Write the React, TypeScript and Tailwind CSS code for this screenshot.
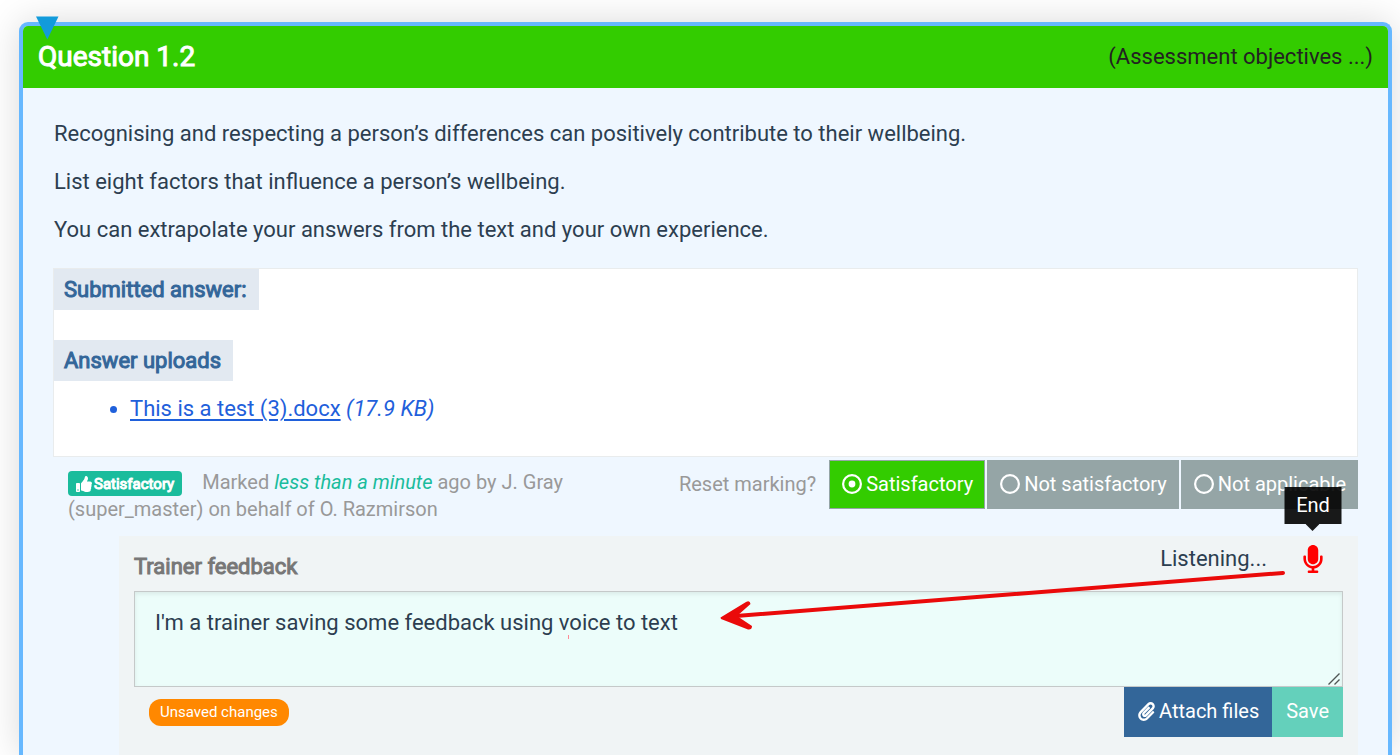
import { useState } from "react";
import type { ReactNode } from "react";
import { FaMicrophone, FaPaperclip, FaThumbsUp } from "react-icons/fa";

const fakeBold = "font-normal [-webkit-text-stroke:1px_currentColor]";

function RadioMark({ checked }: { checked: boolean }) {
  return (
    <svg viewBox="0 0 20 20" className="size-5 shrink-0" fill="none" aria-hidden="true">
      <circle cx="10" cy="10" r="8.9" stroke="currentColor" strokeWidth="2.2" />
      {checked && <circle cx="10" cy="10" r="3.4" fill="currentColor" />}
    </svg>
  );
}

type Mark = "satisfactory" | "not-satisfactory" | "not-applicable";

const marks: { id: Mark; label: string }[] = [
  { id: "satisfactory", label: "Satisfactory" },
  { id: "not-satisfactory", label: "Not satisfactory" },
  { id: "not-applicable", label: "Not applicable" },
];

function MarkOption({
  id,
  label,
  checked,
  onSelect,
}: {
  id: Mark;
  label: string;
  checked: boolean;
  onSelect: (id: Mark) => void;
}) {
  return (
    <label
      htmlFor={id}
      className={`relative flex h-[49px] cursor-pointer items-center gap-1 border border-[#95a5a6] pr-[11px] pb-[2px] pl-3 text-white ${
        checked ? "bg-[#33cc00]" : "bg-[#95a5a6]"
      }`}
    >
      <input
        id={id}
        type="radio"
        name="mark"
        className="sr-only"
        checked={checked}
        onChange={() => onSelect(id)}
      />
      <RadioMark checked={checked} />
      <span>{label}</span>
    </label>
  );
}

function Tag({ children }: { children: ReactNode }) {
  return (
    <h3 className={`flex h-[41px] w-fit items-center bg-[#e2e9f1] pr-3 pl-[10px] text-[22px] text-[#336699] ${fakeBold}`}>
      {children}
    </h3>
  );
}

export default function App() {
  const [mark, setMark] = useState<Mark>("satisfactory");
  const [feedback, setFeedback] = useState("I'm a trainer saving some feedback using voice to text");

  return (
    <div className="flex min-h-screen flex-col overflow-hidden bg-white pt-[22px] pr-[8px] pl-[19px] font-[Roboto,sans-serif] text-[#2c3e50]">
      <section className="relative flex flex-1 flex-col rounded-t-[9px] border-4 border-b-0 border-[#66b8ff] bg-[#eff7ff] shadow-[0_0_36px_rgba(0,0,0,0.15)]">
        <svg viewBox="0 0 24 24" className="absolute -top-[10px] left-[12px] size-6" aria-hidden="true">
          <path d="M1 0.5H23.5L12.3 23.5Z" fill="#129bdb" />
        </svg>
        <header className="flex h-[62px] items-center justify-between rounded-t-[5px] bg-[#33cc00] px-[15px]">
          <h2 className={`text-[28px] text-white ${fakeBold}`}>Question 1.2</h2>
          <button type="button" className="cursor-pointer pb-[2px] text-[22px] text-[#222222]">
            (Assessment objectives ...)
          </button>
        </header>

        <div className="flex flex-1 flex-col px-[30px] pt-[30px]">
          <div className="flex flex-col gap-4 pl-px text-[22px] leading-8">
            <p>Recognising and respecting a person’s differences can positively contribute to their wellbeing.</p>
            <p>List eight factors that influence a person’s wellbeing.</p>
            <p>You can extrapolate your answers from the text and your own experience.</p>
          </div>

          <div className="mt-[22px] border border-[#e9eced] bg-white pb-[31px]">
            <Tag>Submitted answer:</Tag>
            <div className="h-[30px]" />
            <Tag>Answer uploads</Tag>
            <ul className="mt-3 list-disc pl-[76px] text-[22px] leading-8 text-[#1f60db]">
              <li>
                <a href="#file" className="underline decoration-2 underline-offset-[3px]">
                  This is a test (3).docx
                </a>{" "}
                <em>(17.9 KB)</em>
              </li>
            </ul>
          </div>

          <div className="mt-[3px] flex items-start justify-between text-[20px]">
            <p className="w-[530px] pt-[9px] pl-[15px] leading-[27px] text-[#999999]">
              <span className={`mr-5 inline-flex h-[25px] items-center gap-[2px] rounded-[4px] bg-[#1abc9c] px-2 align-middle text-[15px] leading-5 text-white ${fakeBold}`}>
                <FaThumbsUp className="size-4" aria-hidden="true" />
                Satisfactory
              </span>
              Marked <em className="text-[#1abc9c]">less than a minute</em> ago by J. Gray (super_master) on behalf of O.
              Razmirson
            </p>
            <div className="flex items-center">
              <button type="button" className="mr-[13px] cursor-pointer pb-[2px] text-[#999999]">
                Reset marking?
              </button>
              <div role="radiogroup" aria-label="Marking" className="flex gap-[2px]">
                {marks.map((m) => (
                  <MarkOption key={m.id} id={m.id} label={m.label} checked={mark === m.id} onSelect={setMark} />
                ))}
              </div>
            </div>
          </div>

          <div className="relative mt-[13px] ml-[66px] flex-1 bg-[#f0f4f5] px-[15px] pt-2">
            <div className="flex h-[47px] justify-between">
              <label htmlFor="feedback" className={`pt-[7px] text-[22px] leading-8 text-[#777777] ${fakeBold}`}>
                Trainer feedback
              </label>
              <div className="flex items-start gap-[36px] pt-px pr-[20px]">
                <span className="text-[22px] leading-7">Listening...</span>
                <div className="relative">
                  <button type="button" aria-label="End" className="block cursor-pointer text-[#ff0000]">
                    <FaMicrophone className="h-[28px] w-[20px]" />
                  </button>
                  <div
                    role="tooltip"
                    className="absolute bottom-[49px] left-1/2 flex h-[37px] w-[57px] -translate-x-1/2 items-center justify-center bg-black/90 pb-[2px] text-[20px] text-white"
                  >
                    End
                    <svg viewBox="0 0 14 7" className="absolute top-full left-[21px] h-[7px] w-[14px]" aria-hidden="true">
                      <path d="M0 0H14L7 7Z" fill="#000000" fillOpacity="0.9" />
                    </svg>
                  </div>
                </div>
              </div>
            </div>
            <div className="relative">
              <textarea
                id="feedback"
                value={feedback}
                onChange={(e) => setFeedback(e.target.value)}
                spellCheck={false}
                className="block h-24 w-full resize-none border border-[#c5c9c9] bg-[#ecfdfa] px-5 py-[15px] text-[22px] leading-8 shadow-[inset_0_2px_4px_rgba(0,0,0,0.08)] outline-none"
              />
              <svg
                viewBox="0 0 12 12"
                className="pointer-events-none absolute right-[3px] bottom-[2px] size-3"
                fill="none"
                stroke="#4f5655"
                strokeWidth="1.4"
                aria-hidden="true"
              >
                <path d="M0.500 11.500L11.500 0.500M6.500 11.500L11.500 6.500" />
              </svg>
            </div>
            <div className="flex items-start justify-between text-[20px] text-white">
              <span className="mt-3 ml-[15px] flex h-[27px] items-center rounded-[12px] bg-[#ff8800] px-[11px] text-[15px]">
                Unsaved changes
              </span>
              <div className="flex">
                <button type="button" className="flex h-[50px] cursor-pointer items-center gap-[3px] bg-[#336699] px-[13px] pb-[2px]">
                  <FaPaperclip className="size-[19px]" aria-hidden="true" />
                  Attach files
                </button>
                <button type="button" className="h-[50px] cursor-pointer bg-[#64d0bb] px-[14px] pb-[2px]">
                  Save
                </button>
              </div>
            </div>
            <svg
              viewBox="0 0 728 76"
              className="pointer-events-none absolute top-[30px] right-[68px] h-[76px] w-[728px]"
              fill="none"
              aria-hidden="true"
            >
              <path d="M721 7L168 50.500" stroke="#ea0a0a" strokeWidth="4" strokeLinecap="round" />
              <path d="M158.500 51.500L184 36Q188 34 188.500 38L175 50L190 60Q190 64 186 63.500L159 53Z" fill="#ea0a0a" />
              <path d="M6.500 69V73" stroke="#ff8a96" strokeWidth="1" />
            </svg>
          </div>
        </div>
      </section>
    </div>
  );
}
